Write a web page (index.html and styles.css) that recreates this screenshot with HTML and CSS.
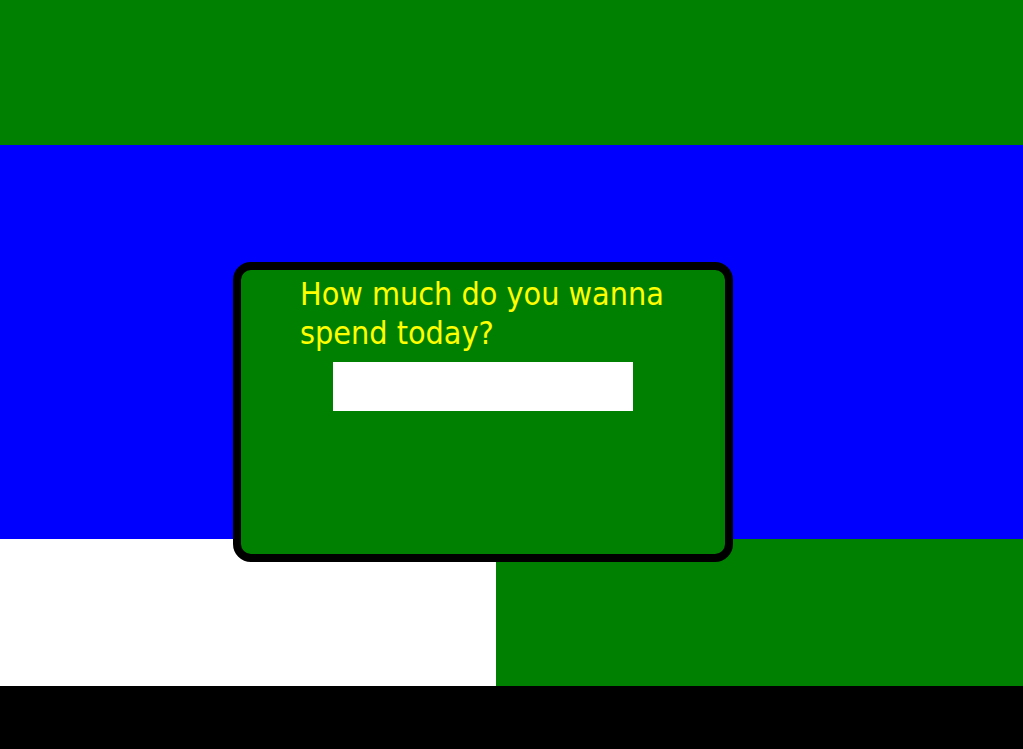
FILE: index.html
```html
<!DOCTYPE html>
<html>
<head>
<meta charset="utf-8">
<link rel="stylesheet" href="styles.css">
</head>
<body>
<div class="page">
  <div class="band-top"></div>
  <div class="band-mid"></div>
  <div class="band-row">
    <div class="cell-white"></div>
    <div class="cell-green"></div>
  </div>
  <div class="band-bottom"></div>
  <div class="modal">
    <p class="question">How much do you wanna spend today?</p>
    <input class="amount" type="text">
  </div>
</div>
</body>
</html>
```
FILE: styles.css
```css
html, body {
  margin: 0;
  padding: 0;
}
.page {
  position: relative;
  width: 1023px;
  height: 749px;
  display: flex;
  flex-direction: column;
  overflow: hidden;
}
.band-top {
  height: 145px;
  background: #008000;
}
.band-mid {
  height: 394px;
  background: #0000ff;
}
.band-row {
  height: 147px;
  display: flex;
}
.cell-white {
  width: 496px;
  background: #ffffff;
}
.cell-green {
  flex: 1;
  background: #008000;
}
.band-bottom {
  flex: 1;
  background: #000000;
}
.modal {
  position: absolute;
  left: 233px;
  top: 262px;
  width: 500px;
  height: 300px;
  box-sizing: border-box;
  border: 8px solid #000;
  border-radius: 18px;
  background: #008000;
  padding: 5px 0 0 59px;
  display: flex;
  flex-direction: column;
}
.question {
  margin: 0;
  width: 380px;
  color: #ffff00;
  font-family: "DejaVu Sans Condensed", "DejaVu Sans", sans-serif;
  font-stretch: condensed;
  font-size: 32px;
  line-height: 39px;
}
.amount {
  margin: 9px 0 0 33px;
  width: 300px;
  height: 49px;
  box-sizing: border-box;
  border: none;
  background: #fff;
  padding: 0;
}
```
